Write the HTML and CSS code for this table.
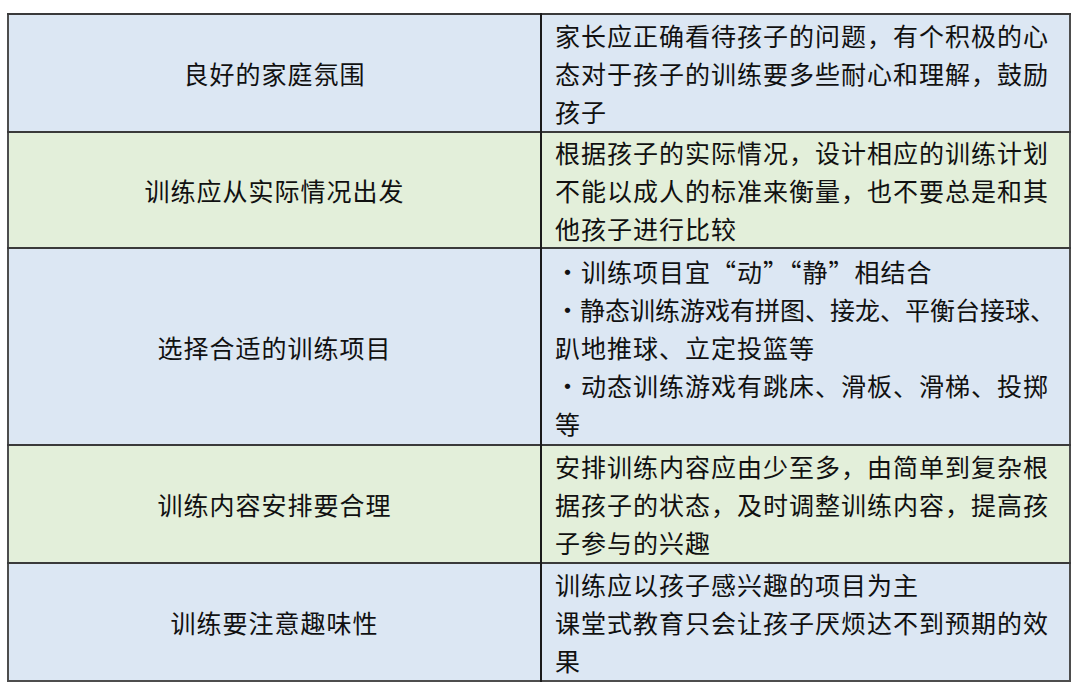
FILE: index.html
```html
<!DOCTYPE html>
<html lang="zh-CN">
<head>
<meta charset="utf-8">
<title>训练要点</title>
<link rel="stylesheet" href="styles.css">
</head>
<body>
<table class="guide">
  <tbody>
    <tr class="row blue r1">
      <td class="topic">良好的家庭氛围</td>
      <td class="detail">家长应正确看待孩子的问题，有个积极的心<br>态对于孩子的训练要多些耐心和理解，鼓励<br>孩子</td>
    </tr>
    <tr class="row green r2">
      <td class="topic">训练应从实际情况出发</td>
      <td class="detail">根据孩子的实际情况，设计相应的训练计划<br>不能以成人的标准来衡量，也不要总是和其<br>他孩子进行比较</td>
    </tr>
    <tr class="row blue r3">
      <td class="topic">选择合适的训练项目</td>
      <td class="detail">·训练项目宜“动”“静”相结合<br><span class="tight">·静态训练游戏有拼图、接龙、平衡台接球、</span><br>趴地推球、立定投篮等<br>·动态训练游戏有跳床、滑板、滑梯、投掷<br>等</td>
    </tr>
    <tr class="row green r4">
      <td class="topic">训练内容安排要合理</td>
      <td class="detail">安排训练内容应由少至多，由简单到复杂根<br>据孩子的状态，及时调整训练内容，提高孩<br>子参与的兴趣</td>
    </tr>
    <tr class="row blue r5">
      <td class="topic">训练要注意趣味性</td>
      <td class="detail">训练应以孩子感兴趣的项目为主<br>课堂式教育只会让孩子厌烦达不到预期的效<br>果</td>
    </tr>
  </tbody>
</table>
</body>
</html>
```

FILE: styles.css
```css
html, body {
  margin: 0;
  padding: 0;
  background: #ffffff;
}

body {
  font-family: "Noto Sans CJK SC", "Noto Sans", sans-serif;
  color: #111111;
}

.guide {
  margin: 13px 0 0 7px;
  width: 1064px;
  border-collapse: collapse;
  border: 2px solid #4d4d4d;
  table-layout: fixed;
}

.guide td {
  padding: 0;
  vertical-align: middle;
  font-size: 25px;
  line-height: 38px;
  letter-spacing: 1px;
  border-top: 2px solid #3a3a3a;
}

.topic {
  width: 531px;
  text-align: center;
  border-right: 2px solid #1a1a1a;
}

.detail {
  text-align: left;
  padding-left: 13px !important;
  white-space: nowrap;
}

.blue td {
  background: #dce7f3;
}

.green td {
  background: #e3efda;
}

.r1 { height: 118px; }
.r2 { height: 114px; }
.r3 { height: 197px; }
.r4 { height: 118px; }
.r5 { height: 118px; }

.tight {
  letter-spacing: 0;
}
```
